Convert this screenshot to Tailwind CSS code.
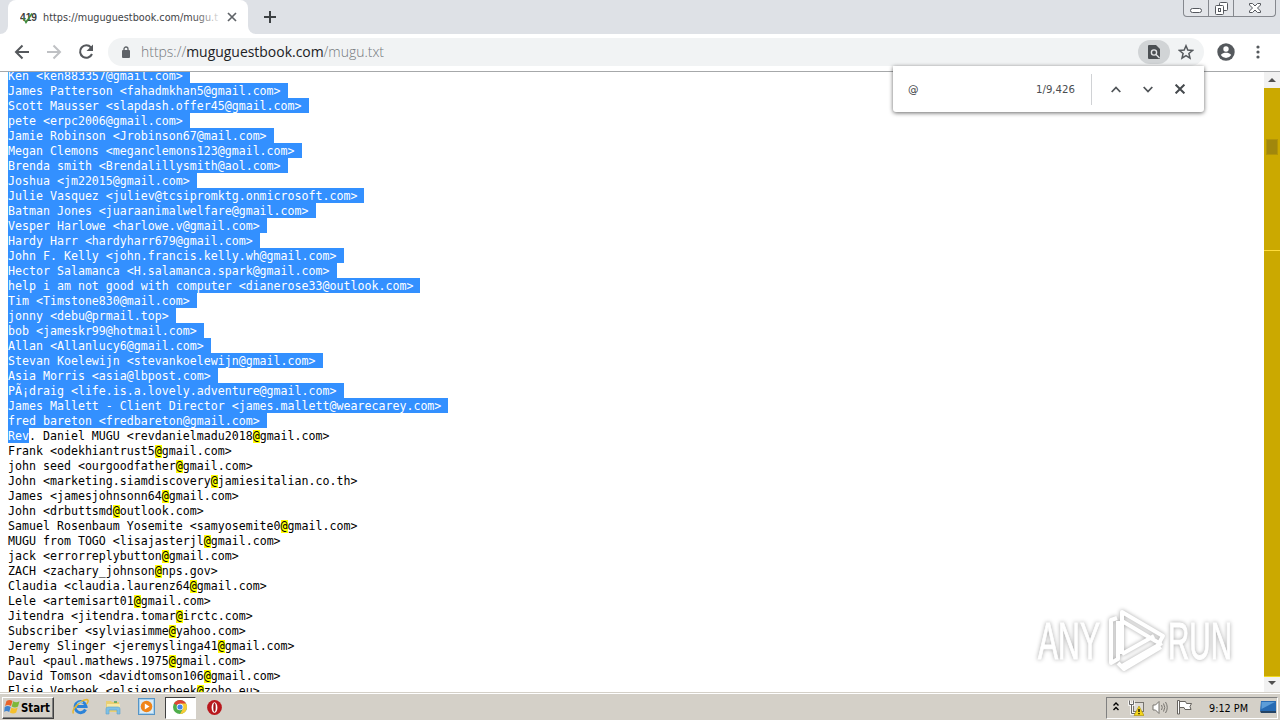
<!DOCTYPE html>
<html lang="en">
    <head>
        <meta charset="UTF-8" />
        <meta name="viewport" content="width=device-width, initial-scale=1.0" />
        <title>https://muguguestbook.com/mugu.txt</title>
        <script src="https://cdn.jsdelivr.net/npm/@tailwindcss/browser@4"></script>
    </head>

    <body class="relative flex h-[720px] w-[1280px] flex-col overflow-hidden bg-white font-['DejaVu_Sans','Liberation_Sans',sans-serif]">
        <!-- Tab strip -->
        <header class="flex h-[34px] shrink-0 items-start justify-between bg-[#dee1e6]">
            <div class="flex h-full items-center">
                <div class="h-full w-2 bg-white"><div class="h-full rounded-br-lg bg-[#dee1e6]"></div></div>
                <div class="flex h-full w-60 items-center rounded-t-lg bg-white pl-3">
                    <svg class="shrink-0" width="17" height="16" viewBox="0 0 17 16">
                        <text x="0" y="11.5" font-size="10" font-weight="bold" textLength="17" lengthAdjust="spacingAndGlyphs" fill="#404040" font-family="Liberation Sans, sans-serif">419</text>
                        <path d="M3.500 9l2.500 4.500L12 4.500" fill="none" stroke="#3c8a3c" stroke-width="1.500" />
                    </svg>
                    <svg class="ml-1.5 shrink-0" width="177" height="18">
                        <defs>
                            <linearGradient id="fade" gradientUnits="userSpaceOnUse" x1="150" x2="176" y1="0" y2="0">
                                <stop stop-color="#3c4043" />
                                <stop offset="1" stop-color="#3c4043" stop-opacity="0.15" />
                            </linearGradient>
                        </defs>
                        <text x="0" y="13" font-size="11" textLength="175" lengthAdjust="spacingAndGlyphs" fill="url(#fade)">https://muguguestbook.com/mugu.t</text>
                    </svg>
                    <svg class="ml-[7px] shrink-0" width="10" height="10" viewBox="0 0 10 10" stroke="#5f6368" stroke-width="1.700"><path d="M1 1l8 8M9 1l-8 8" /></svg>
                </div>
                <div class="h-full w-2 bg-white"><div class="h-full rounded-bl-lg bg-[#dee1e6]"></div></div>
                <svg class="ml-2" width="12" height="12" viewBox="0 0 12 12" stroke="#3c4043" stroke-width="2"><path d="M6 0v12M0 6h12" /></svg>
            </div>
            <!-- Window buttons -->
            <div class="mr-1 flex h-[17px] w-[93px] rounded-b-[4px] border border-t-0 border-[#85888e] bg-[#e3e5e9]">
                <div class="flex w-[25px] justify-center border-r border-[#85888e] pt-[8px]"><div class="h-[5px] w-3 rounded-sm border border-[#55585e] bg-white"></div></div>
                <div class="flex w-[25px] justify-center border-r border-[#85888e] pt-[2px]">
                    <svg width="13" height="13" viewBox="0 0 13 13" fill="#fff" stroke="#55585e"><rect x="4.500" y=".5" width="8" height="8" rx="1" /><rect x=".5" y="3.500" width="8" height="9" rx="1" /><rect x="3.500" y="6.500" width="2" height="3" /></svg>
                </div>
                <div class="flex flex-1 justify-center pt-[3px]">
                    <svg width="12" height="10" viewBox="0 0 12 10" fill="#fff" stroke="#55585e"><path d="M.5.500h3L6 3 8.500.500h3V2L8.500 5l3 3v1.500h-3L6 7 3.500 9.500h-3V8l3-3-3-3z" /></svg>
                </div>
            </div>
        </header>

        <!-- Toolbar -->
        <div class="flex h-[38px] shrink-0 items-center border-b border-[#a6a8aa] bg-white pr-[14px] pb-px pl-[14px] text-[#5f6368]">
            <svg width="16" height="16" viewBox="0 0 16 16" fill="none" stroke="#55585c" stroke-width="2"><path d="M15 8H2M8.500 1.500L2 8l6.500 6.500" /></svg>
            <svg class="ml-4" width="16" height="16" viewBox="0 0 16 16" fill="none" stroke="#bfc1c4" stroke-width="2"><path d="M1 8h13M7.500 1.500L14 8l-6.500 6.500" /></svg>
            <svg class="ml-4" width="16" height="16" viewBox="0 0 16 16"><path d="M13 3.500A6.200 6.200 0 1 0 14 10" fill="none" stroke="#55585c" stroke-width="2" /><path d="M15 .5V7H8.500z" fill="#55585c" /></svg>
            <div class="ml-[14px] flex h-7 w-[1096px] items-center rounded-full bg-[#f1f3f4] pl-[14px]">
                <svg width="8" height="12" viewBox="0 0 8 12"><rect y="4" width="8" height="8" rx="1" fill="#5f6368" /><path d="M2 4.500V3a2 2 0 0 1 4 0v1.500" fill="none" stroke="#5f6368" stroke-width="1.300" /></svg>
                <svg class="ml-[11px]" width="246" height="22">
                    <text x="0" y="16" font-size="14.500" textLength="243" lengthAdjust="spacingAndGlyphs" font-family="Open Sans, sans-serif" font-weight="300" fill="#74787c">https://<tspan fill="#202124" font-weight="400">muguguestbook.com</tspan>/mugu.txt</text>
                </svg>
                <div class="ml-auto flex h-6 w-8 items-center justify-center rounded-full bg-[#d1d4d6]">
                    <svg width="12" height="14" viewBox="0 0 12 14"><path d="M1 0h7l4 4v9a1 1 0 0 1-1 1H1a1 1 0 0 1-1-1V1a1 1 0 0 1 1-1z" fill="#4b4f53" /><circle cx="6" cy="7.500" r="2.600" fill="#4b4f53" stroke="#e3e5e7" stroke-width="1.400" /><path d="M8 9.500l3.500 3.500" stroke="#e3e5e7" stroke-width="1.400" /></svg>
                </div>
                <svg class="mr-[10px] ml-2" width="16" height="16" viewBox="0 0 16 16" fill="none" stroke="#55595d" stroke-width="1.500"><path d="M8 1.800l1.800 4.300 4.700.4-3.600 3 1.100 4.600L8 11.700l-4 2.400 1.100-4.600-3.600-3 4.700-.4z" /></svg>
            </div>
            <svg class="ml-[13px] shrink-0" width="18" height="18" viewBox="0 0 18 18"><circle cx="9" cy="9" r="8.700" fill="#55595d" /><circle cx="9" cy="6" r="2.700" fill="#fff" /><path d="M3.800 12c1-1.700 3.400-2.300 5.200-2.300s4.200.6 5.200 2.300A6.300 6.300 0 0 1 9 15a6.300 6.300 0 0 1-5.200-3z" fill="#fff" /></svg>
            <svg class="ml-[21px] shrink-0" width="4" height="14" viewBox="0 0 4 14" fill="#55595d"><circle cx="2" cy="2" r="1.600" /><circle cx="2" cy="7" r="1.600" /><circle cx="2" cy="12" r="1.600" /></svg>
        </div>

        <!-- Page -->
        <main class="flex h-[620px] shrink-0 overflow-hidden">
            <div id="lines" class="-mt-1 flex-1 pl-2 font-['DejaVu_Sans_Mono',monospace] text-[11.628px] leading-[17px] whitespace-pre text-black"></div>
            <div class="flex w-4 flex-col bg-[#cba900]">
                <div class="flex h-4 items-center justify-center bg-[#f1f1f1]"><svg width="8" height="4"><path d="M0 4l4-4 4 4z" fill="#505050" /></svg></div>
                <div class="mt-[51px] ml-[2px] h-4 w-3 border border-[#b39506] bg-[#a1870c]"></div>
                <div class="mt-[95px] h-px bg-[#ffdc3c]"></div>
                <div class="mt-auto h-px bg-[#f0d820]"></div>
                <div class="flex h-[15px] items-center justify-center bg-[#f1f1f1]"><svg class="-mt-[3px]" width="8" height="4"><path d="M0 0l4 4 4-4z" fill="#505050" /></svg></div>
            </div>
        </main>

        <!-- Taskbar -->
        <footer class="flex h-7 shrink-0 items-center border-t border-[#d4d0c8] bg-[#d4d0c8] pl-[2px] shadow-[inset_0_1px_0_#fff]">
            <div class="mt-[2px] flex h-[22px] w-[52px] items-center border border-t-white border-r-[#404040] border-b-[#404040] border-l-white pl-px shadow-[inset_-1px_-1px_0_#808080]">
                <svg class="-mt-[2px]" width="16" height="15" viewBox="0 0 16 15"><path d="M2.500 2q3-2 6 0L7 7q-3-2-6 0z" fill="#e8642c" /><path d="M9.200 2.300q3 2 6.300 0L14 7.500q-3 2-6.300 0z" fill="#7db83a" /><path d="M.7 8q3-2 6 0L5.200 13q-3-2-5 0z" fill="#3f83cf" /><path d="M7.400 8.500q3 2 6.300 0l-1.500 5q-3 2-6.300 0z" fill="#f5c02c" /></svg>
                <svg class="ml-px" width="31" height="14"><text x="0" y="11" font-size="11.500" font-weight="bold" textLength="29" lengthAdjust="spacingAndGlyphs">Start</text></svg>
            </div>
            <svg class="ml-[18px]" width="17" height="17" viewBox="0 0 17 17" fill="none"><path d="M13.500 11.500A5.500 5.500 0 1 1 14 8.500H5" stroke="#2c83d8" stroke-width="3" /><path d="M1.500 15.500C-1 12 8 2 15 1.500c2 .5 1 3-.5 4.500" stroke="#e6b62f" stroke-width="1.500" /><path d="M5 5.500Q8 3 11 4.500" stroke="#8fd0fa" /></svg>
            <svg class="ml-[16px]" width="16" height="16" viewBox="0 0 16 16"><path d="M1 2h5l1 1h7v10H1z" fill="#e9cf74" /><path d="M2 5h13v6H2z" fill="#f7e9a6" /><path d="M1 15V10q0-2 2-2h10q2 0 2 2v5h-3v-4H4v4z" fill="#7fc1e6" stroke="#5aa2cc" stroke-width=".6" /><path d="M9 3h3" stroke="#4aa05a" stroke-width="1.500" /></svg>
            <svg class="ml-[17px]" width="17" height="17" viewBox="0 0 17 17"><rect x=".5" y=".5" width="16" height="16" fill="#a8d0ec" stroke="#5594c6" /><rect x="2" y="2" width="13" height="13" fill="#d9ecf8" /><circle cx="8.500" cy="8.500" r="5.800" fill="#f08519" /><path d="M6.800 5.500v6l4.700-3z" fill="#fff" /></svg>
            <div class="mt-[2px] ml-[10px] flex h-[22px] w-[31px] items-center justify-center border border-t-[#404040] border-r-white border-b-white border-l-[#404040] bg-white pr-px pb-px">
                <svg width="14" height="14" viewBox="0 0 14 14"><circle cx="7" cy="7" r="7" fill="#4fae4b" /><path d="M7 7L.94 3.500A7 7 0 0 1 13.060 3.500z" fill="#df4436" /><path d="M7 7V3.500h6.060A7 7 0 0 1 7 14l3-5.200z" fill="#f8cb35" /><circle cx="7" cy="7" r="3.300" fill="#fff" /><circle cx="7" cy="7" r="2.600" fill="#4285e8" /></svg>
            </div>
            <svg class="mt-[2px] ml-[11px]" width="15" height="15" viewBox="0 0 15 15"><circle cx="7.500" cy="7.500" r="7.400" fill="#b9181d" /><ellipse cx="7.500" cy="7.500" rx="2.900" ry="5.300" fill="#fff" /><ellipse cx="7.500" cy="7.500" rx="1.200" ry="4.400" fill="#a01015" /></svg>

            <div class="mt-[2px] mr-[2px] ml-auto flex h-[22px] w-[172px] items-center border border-t-[#808080] border-r-white border-b-white border-l-[#808080] pl-[6px]">
                <svg class="-mt-[3px]" width="6" height="9" viewBox="0 0 6 9" fill="none" stroke="#000" stroke-width="1.400"><path d="M.5 3.500L3 1l2.500 2.500M.5 8L3 5.500 5.500 8" /></svg>
                <svg class="ml-[9px]" width="16" height="16" viewBox="0 0 16 16"><rect x="5.500" y="2.500" width="10" height="9" fill="#dedcd8" stroke="#77746f" /><path d="M1.500.500v4h4v-4M3.500 4.500v9h4" fill="none" stroke="#fff" stroke-width="2.500" /><path d="M1.500.500v4h4v-4M3.500 4.500v9h4" fill="none" stroke="#666" /><path d="M11 6l5 9.500H6z" fill="#f4d51c" stroke="#a98d00" stroke-width=".6" /><path d="M11 9v3M11 13v1.200" stroke="#000" stroke-width="1.300" /></svg>
                <svg class="ml-2" width="16" height="15" viewBox="0 0 16 15" fill="none" stroke="#77746f"><path d="M1 5h2.500L7 1.500v12L3.500 10H1z" fill="#fff" /><path d="M9.500 5q1.500 2.500 0 5M11.500 3.500q2.500 4 0 8M13.500 2q3.500 5.500 0 11" /></svg>
                <svg class="ml-2" width="17" height="15" viewBox="0 0 17 15" fill="#fff" stroke="#66635e"><path d="M1.500.500h2V14h-2zM3.500 1.500h6l1 2h5l-1.500 3 1 3h-6l-1-2H3.500z" /></svg>
                <svg class="ml-4" width="42" height="14"><text x="0" y="11" font-size="11" textLength="39" lengthAdjust="spacingAndGlyphs">9:12 PM</text></svg>
                <svg class="ml-[9px]" width="16" height="13" viewBox="0 0 16 13"><path d="M1 0h15v10H0z" fill="#276bb3" /><path d="M1.500 1H15L1.500 8z" fill="#5c9dd8" /><path d="M0 10h16v2H1z" fill="#254465" /></svg>
            </div>
        </footer>

        <!-- Find bar, over the page -->
        <div class="absolute top-[66px] left-[893px] flex h-[46px] w-[311px] items-center rounded-b-[3px] bg-white pl-[15px] text-[#3c4043] shadow-[0_1px_4px_rgba(0,0,0,0.6)]">
            <svg width="128" height="14"><text x="0" y="11" font-size="10.500" fill="#3c4043">@</text></svg>
            <svg width="40" height="14"><text x="0" y="11" font-size="11" textLength="39" lengthAdjust="spacingAndGlyphs" fill="#4a4d51">1/9,426</text></svg>
            <div class="ml-[15px] h-[31px] w-px bg-[#d0d2d5]"></div>
            <svg class="ml-[19px]" width="10" height="7" viewBox="0 0 10 7" fill="none" stroke="#505458" stroke-width="1.800"><path d="M.7 6L5 1.500 9.300 6" /></svg>
            <svg class="ml-[22px]" width="10" height="7" viewBox="0 0 10 7" fill="none" stroke="#505458" stroke-width="1.800"><path d="M.7 1L5 5.500 9.300 1" /></svg>
            <svg class="ml-[22px]" width="10" height="10" viewBox="0 0 10 10" stroke="#45494d" stroke-width="2"><path d="M.6.600l8.800 8.800M9.400.600L.6 9.400" /></svg>
        </div>

        <!-- Watermark -->
        <svg class="absolute top-[606px] left-[1034px] drop-shadow-[0_0_2px_rgba(0,0,0,0.35)]" width="204" height="68" viewBox="0 0 204 68">
            <g fill="#fff" stroke="#fff" font-family="Liberation Sans Narrow, Liberation Sans, sans-serif" font-size="51">
                <text x="4" y="53" textLength="62" lengthAdjust="spacingAndGlyphs">ANY</text>
                <text x="134" y="53" textLength="64" lengthAdjust="spacingAndGlyphs">RUN</text>
            </g>
            <g fill="none" stroke="#fff" stroke-width="4" stroke-linejoin="round">
                <path d="M88 48V6l41 24-4 7-37-22M88 48l32-18" />
                <path d="M83 12l-6 2v43l7-4V15M88 60l40-23M84 57l6 6 37-22" />
            </g>
        </svg>

        <script>
            // Number of rows covered by the text selection
            const SELECTED = 24;

            const lines = [
                "Ken <ken883357@gmail.com>",
                "James Patterson <fahadmkhan5@gmail.com>",
                "Scott Mausser <slapdash.offer45@gmail.com>",
                "pete <erpc2006@gmail.com>",
                "Jamie Robinson <Jrobinson67@mail.com>",
                "Megan Clemons <meganclemons123@gmail.com>",
                "Brenda smith <Brendalillysmith@aol.com>",
                "Joshua <jm22015@gmail.com>",
                "Julie Vasquez <juliev@tcsipromktg.onmicrosoft.com>",
                "Batman Jones <juaraanimalwelfare@gmail.com>",
                "Vesper Harlowe <harlowe.v@gmail.com>",
                "Hardy Harr <hardyharr679@gmail.com>",
                "John F. Kelly <john.francis.kelly.wh@gmail.com>",
                "Hector Salamanca <H.salamanca.spark@gmail.com>",
                "help i am not good with computer <dianerose33@outlook.com>",
                "Tim <Timstone830@mail.com>",
                "jonny <debu@prmail.top>",
                "bob <jameskr99@hotmail.com>",
                "Allan <Allanlucy6@gmail.com>",
                "Stevan Koelewijn <stevankoelewijn@gmail.com>",
                "Asia Morris <asia@lbpost.com>",
                "PÃ¡draig <life.is.a.lovely.adventure@gmail.com>",
                "James Mallett - Client Director <james.mallett@wearecarey.com>",
                "fred bareton <fredbareton@gmail.com>",
                "Rev. Daniel MUGU <revdanielmadu2018@gmail.com>",
                "Frank <odekhiantrust5@gmail.com>",
                "john seed <ourgoodfather@gmail.com>",
                "John <marketing.siamdiscovery@jamiesitalian.co.th>",
                "James <jamesjohnsonn64@gmail.com>",
                "John <drbuttsmd@outlook.com>",
                "Samuel Rosenbaum Yosemite <samyosemite0@gmail.com>",
                "MUGU from TOGO <lisajasterjl@gmail.com>",
                "jack <errorreplybutton@gmail.com>",
                "ZACH <zachary_johnson@nps.gov>",
                "Claudia <claudia.laurenz64@gmail.com>",
                "Lele <artemisart01@gmail.com>",
                "Jitendra <jitendra.tomar@irctc.com>",
                "Subscriber <sylviasimme@yahoo.com>",
                "Jeremy Slinger <jeremyslinga41@gmail.com>",
                "Paul <paul.mathews.1975@gmail.com>",
                "David Tomson <davidtomson106@gmail.com>",
                "Elsie Verbeek <elsieverbeek@zoho.eu>",
            ];

            function span(text, cls) {
                const el = document.createElement("span");
                el.className = cls;
                el.textContent = text;
                return el;
            }

            const container = document.getElementById("lines");
            lines.forEach((line, i) => {
                const row = document.createElement("div");
                row.className = "flex h-[15px] w-fit";
                if (i < SELECTED) {
                    // the selected line break is one character wide
                    row.className = "flex h-[15px] w-fit bg-[#3390ff] text-white";
                    row.append(span(line + " ", ""));
                } else {
                    let rest = line;
                    if (i === SELECTED) {
                        row.append(span("Rev", "bg-[#3390ff] text-white"));
                        rest = line.slice(3);
                    }
                    const [before, after] = rest.split("@");
                    row.append(span(before, ""), span("@", "h-[13px] mt-[2px] leading-[13px] bg-[#ffff00]"), span(after, ""));
                }
                container.append(row);
            });
        </script>
    </body>
</html>
